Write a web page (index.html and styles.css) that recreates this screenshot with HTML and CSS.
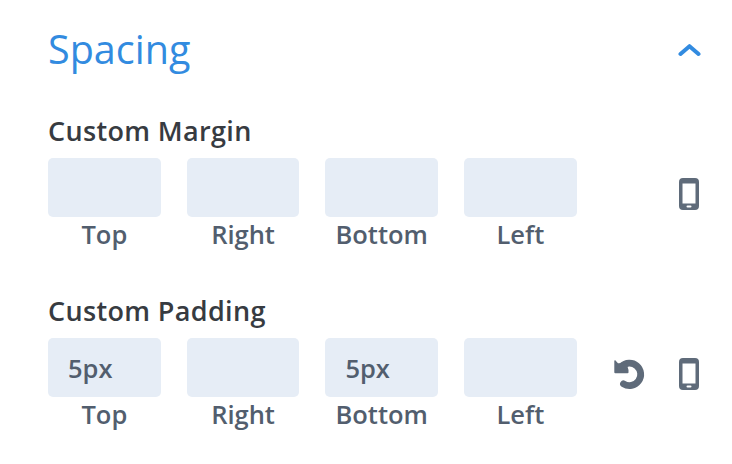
FILE: index.html
```html
<!DOCTYPE html>
<html lang="en">
<head>
    <meta charset="UTF-8">
    <meta name="viewport" content="width=device-width, initial-scale=1.0">
    <title>Spacing</title>
    <link rel="stylesheet" href="styles.css">
</head>
<body>
    <div class="panel">
        <div class="panel-header">
            <h2>Spacing</h2>
            <svg class="chevron" width="24" height="14" viewBox="0 0 24 14">
                <path d="M3.500 11L12.500 3.200L21.500 11" />
            </svg>
        </div>

        <div class="option">
            <h3>Custom Margin</h3>
            <div class="option-row">
                <div class="fields">
                    <label><input type="text" value=""><span>Top</span></label>
                    <label><input type="text" value=""><span>Right</span></label>
                    <label><input type="text" value=""><span>Bottom</span></label>
                    <label><input type="text" value=""><span>Left</span></label>
                </div>
                <div class="actions">
                    <svg class="phone" width="20" height="32" viewBox="0 0 20 32">
                        <path fill-rule="evenodd" d="M4 0H16Q20 0 20 4V28Q20 32 16 32H4Q0 32 0 28V4Q0 0 4 0ZM3.500 5.500V25.500H16.500V5.500ZM8.500 27.500Q7.500 27.500 7.500 28.500T8.500 29.500H11.500Q12.500 29.500 12.500 28.500T11.500 27.500Z" />
                    </svg>
                </div>
            </div>
        </div>

        <div class="option">
            <h3>Custom Padding</h3>
            <div class="option-row">
                <div class="fields">
                    <label><input type="text" value="5px"><span>Top</span></label>
                    <label><input type="text" value=""><span>Right</span></label>
                    <label><input type="text" value="5px"><span>Bottom</span></label>
                    <label><input type="text" value=""><span>Left</span></label>
                </div>
                <div class="actions">
                    <svg class="reset" width="32" height="32" viewBox="0 0 32 32">
                        <path class="arc" d="M8.500 8.500A11.200 11.200 0 1 1 10.500 25.800" />
                        <path class="head" d="M1.300 3Q1.300 2 2.300 2.300L5 5.200H13.500L15.500 12V14.500Q15.500 15.200 14.500 15.200H2.300Q1.300 15.200 1.300 14.200Z" />
                    </svg>
                    <svg class="phone" width="20" height="32" viewBox="0 0 20 32">
                        <path fill-rule="evenodd" d="M4 0H16Q20 0 20 4V28Q20 32 16 32H4Q0 32 0 28V4Q0 0 4 0ZM3.500 5.500V25.500H16.500V5.500ZM8.500 27.500Q7.500 27.500 7.500 28.500T8.500 29.500H11.500Q12.500 29.500 12.500 28.500T11.500 27.500Z" />
                    </svg>
                </div>
            </div>
        </div>
    </div>
</body>
</html>
```

FILE: styles.css
```css
* {
    box-sizing: border-box;
}
body {
    margin: 0;
    background: #fff;
    font-family: "Open Sans", "Noto Sans", sans-serif;
    font-weight: 600;
    color: #525e6e;
}
.panel {
    padding: 20px 31px 0 48px;
}
.panel-header {
    display: flex;
    justify-content: space-between;
    align-items: center;
    height: 60px;
    margin-bottom: 33px;
}
h2 {
    margin: 0;
    padding-bottom: 2px;
    font-size: 39.5px;
    font-weight: 400;
    color: #328be0;
}
.chevron {
    fill: none;
    stroke: #328be0;
    stroke-width: 4;
    stroke-linecap: round;
    stroke-linejoin: round;
}
.option {
    height: 180px;
}
h3 {
    margin: 0 0 9px;
    font-size: 27px;
    line-height: 36px;
    font-weight: 600;
    letter-spacing: .35px;
    color: #373b41;
}
.option-row {
    display: flex;
    justify-content: space-between;
}
.fields {
    display: flex;
    gap: 26px;
}
label {
    width: 112.7px;
    text-align: center;
    font-size: 25.5px;
    line-height: 34px;
}
label span {
    display: block;
}
input {
    display: block;
    width: 100%;
    height: 59px;
    padding: 1px 20px 0;
    border: 0;
    border-radius: 5px;
    background: #e6edf6;
    color: inherit;
    font: inherit;
}
.actions {
    display: flex;
    align-items: center;
    gap: 34px;
    height: 72px;
    padding-right: 2px;
    fill: #5f6b7a;
}
.arc {
    fill: none;
    stroke: #5f6b7a;
    stroke-width: 6.8;
    stroke-linecap: round;
}
```
